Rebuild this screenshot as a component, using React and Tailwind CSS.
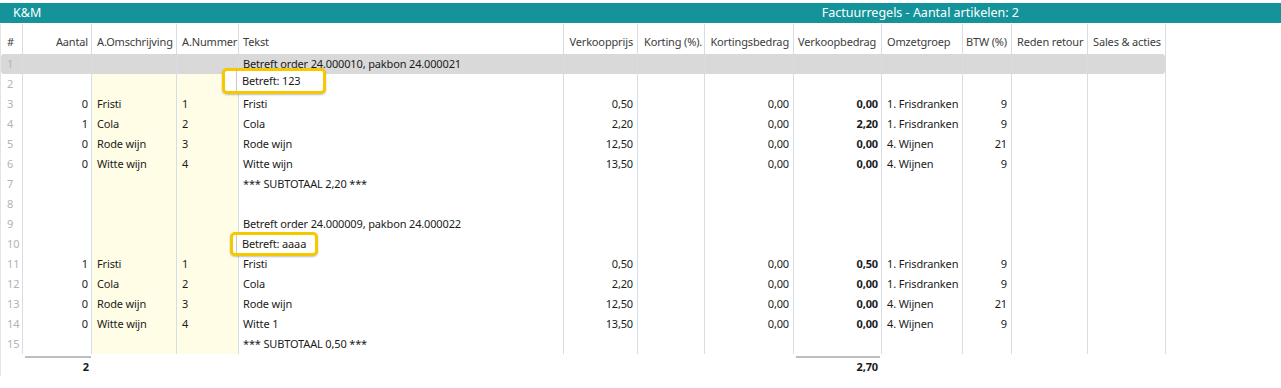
import React from "react";

const cols = [
    { key: "nr", w: "w-[22px]", align: "text-left pl-[6px]", head: "#" },
    { key: "aantal", w: "w-[69px]", align: "text-right pr-[3px]", head: "Aantal" },
    { key: "omschr", w: "w-[85px]", align: "text-left pl-[5px]", head: "A.Omschrijving", yellow: true },
    { key: "artnr", w: "w-[62px]", align: "text-left pl-[5px]", head: "A.Nummer", yellow: true },
    { key: "tekst", w: "w-[325px]", align: "text-left pl-[4px]", head: "Tekst" },
    { key: "prijs", w: "w-[74px]", align: "text-right pr-[4px]", head: "Verkoopprijs" },
    { key: "korting", w: "w-[67px]", align: "text-left pl-[6px]", headAlign: "text-left pl-[6px]", head: "Korting (%)." },
    { key: "kbedrag", w: "w-[89px]", align: "text-right pr-[4px]", head: "Kortingsbedrag" },
    { key: "vbedrag", w: "w-[88px]", align: "text-right pr-[3px] font-bold", headAlign: "text-left pl-[4px]", head: "Verkoopbedrag" },
    { key: "groep", w: "w-[81px]", align: "text-left pl-[5px]", head: "Omzetgroep" },
    { key: "btw", w: "w-[49px]", align: "text-right pr-[4px]", head: "BTW (%)" },
    { key: "retour", w: "w-[76px]", align: "text-left pl-[5px]", head: "Reden retour" },
    { key: "sales", w: "w-[78px]", align: "text-left pl-[5px]", head: "Sales & acties" },
];

const item = (aantal, omschr, artnr, tekst, prijs, vbedrag, groep, btw) => ({
    aantal, omschr, artnr, tekst, prijs, kbedrag: "0,00", vbedrag, groep, btw,
});

const rows = [
    { tekst: "Betreft order 24.000010, pakbon 24.000021", selected: true },
    { tekst: "" },
    item("0", "Fristi", "1", "Fristi", "0,50", "0,00", "1. Frisdranken", "9"),
    item("1", "Cola", "2", "Cola", "2,20", "2,20", "1. Frisdranken", "9"),
    item("0", "Rode wijn", "3", "Rode wijn", "12,50", "0,00", "4. Wijnen", "21"),
    item("0", "Witte wijn", "4", "Witte wijn", "13,50", "0,00", "4. Wijnen", "9"),
    { tekst: "*** SUBTOTAAL 2,20 ***" },
    { tekst: "" },
    { tekst: "Betreft order 24.000009, pakbon 24.000022" },
    { tekst: "" },
    item("1", "Fristi", "1", "Fristi", "0,50", "0,50", "1. Frisdranken", "9"),
    item("0", "Cola", "2", "Cola", "2,20", "0,00", "1. Frisdranken", "9"),
    item("0", "Rode wijn", "3", "Rode wijn", "12,50", "0,00", "4. Wijnen", "21"),
    item("0", "Witte wijn", "4", "Witte 1", "13,50", "0,00", "4. Wijnen", "9"),
    { tekst: "*** SUBTOTAAL 0,50 ***" },
];

function Highlight({ className, children }) {
    return (
        <div className={`absolute z-10 bg-white border-[3px] border-[#f6c800] rounded-[5px] shadow-[0_1px_2px_rgba(0,0,0,0.25)] flex ${className}`}>
            {children}
        </div>
    );
}

export default function App() {
    return (
        <div className="relative w-[1281px] h-[388px] bg-white overflow-hidden text-[11px] tracking-[-0.15px] text-[#1b1b1b]" style={{ fontFamily: '"Noto Sans", "Open Sans", sans-serif' }}>
            <div className="mt-[3px] h-[20px] bg-[#14939a] text-white flex items-center text-[12.5px] tracking-normal">
                <span className="pl-[13px]">K&amp;M</span>
                <span className="ml-auto mr-[262px]">Factuurregels - Aantal artikelen: 2</span>
            </div>

            <div className="mt-[1px] border-l border-[#e4e4e4]">
                {/* kolomkoppen */}
                <div className="flex h-[30px]">
                    {cols.map((c) => (
                        <div key={c.key} className={`${c.w} shrink-0 border-r border-[#d6dde7] ${c.headAlign || c.align.replace(" font-bold", "")} text-[#3c3c3c] whitespace-nowrap pt-[10px]`}>
                            {c.head}
                        </div>
                    ))}
                </div>

                {/* regels */}
                {rows.map((r, i) => (
                    <div key={i} className={`flex h-[20px] w-[1164px] ${r.selected ? "bg-[#d9d9d9] rounded-[3px]" : ""}`}>
                        {cols.map((c) => {
                            const value = c.key === "nr" ? i + 1 : r[c.key];
                            let cls = c.align;
                            if (c.key === "nr") cls += " text-[#b3b3b3]";
                            const bg = c.yellow && !r.selected ? "bg-[#fffde6]" : "";
                            return (
                                <div key={c.key} className={`${c.w} shrink-0 border-r border-[#d6dde7] ${bg} ${cls} whitespace-nowrap leading-[20px]`}>
                                    {value}
                                </div>
                            );
                        })}
                    </div>
                ))}

                {/* totalen */}
                <div className="flex pt-[2px]">
                    <div className="w-[24px] shrink-0" />
                    <div className="w-[66px] shrink-0 border-t-[2px] border-[#bdbdbd] text-right pr-[2px] font-bold leading-[18px]">2</div>
                    <div className="w-[705px] shrink-0" />
                    <div className="w-[84px] shrink-0 border-t-[2px] border-[#bdbdbd] text-right pr-[2px] font-bold leading-[18px]">2,70</div>
                </div>
            </div>

            <Highlight className="left-[222px] top-[68px] w-[104px] h-[26px]">
                <div className="ml-[11px] border-l border-[#c9c9c9] pl-[5px] flex items-center h-full whitespace-nowrap">Betreft: 123</div>
            </Highlight>
            <Highlight className="left-[230px] top-[232px] w-[88px] h-[24px]">
                <div className="ml-[3px] border-l border-[#c9c9c9] pl-[5px] flex items-center h-full whitespace-nowrap">Betreft: aaaa</div>
            </Highlight>
        </div>
    );
}
